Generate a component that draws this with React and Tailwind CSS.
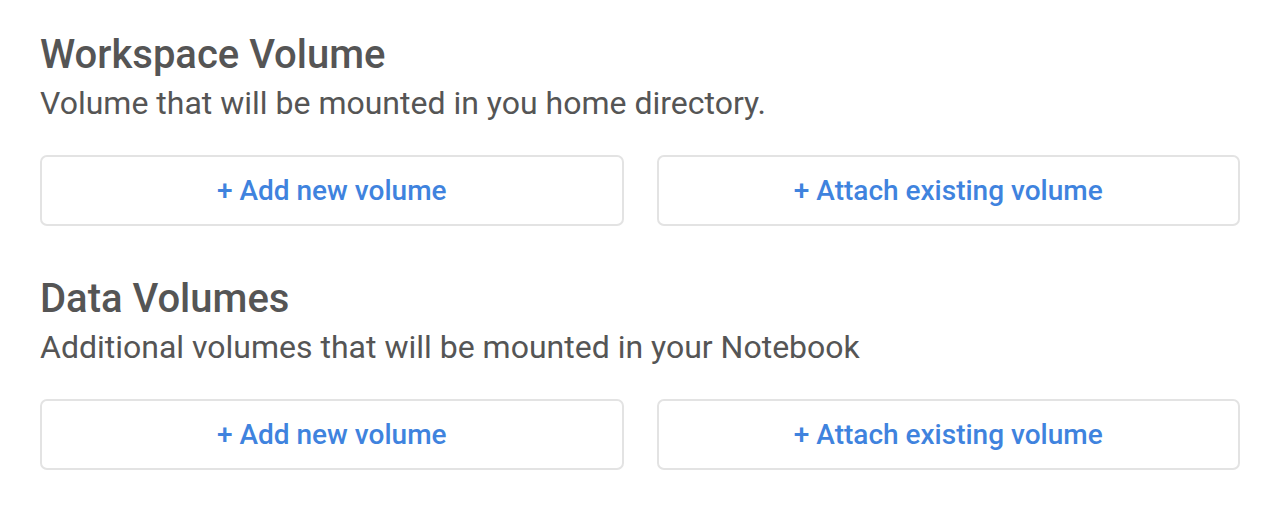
export default function App() {
  const Section = ({ title, sub }) => (
    <div className="flex flex-col">
      <h2 className="text-[40px] leading-[48px] font-medium text-[#555555]">{title}</h2>
      <p className="mt-[4px] text-[32px] leading-[40px] text-[#555555]">{sub}</p>
      <div className="mt-[32px] grid grid-cols-2 gap-[33px]">
        <button className="h-[71px] rounded-[7px] border-2 border-[#e3e3e3] bg-white text-[28px] font-medium text-[#3f83de]">
          + Add new volume
        </button>
        <button className="h-[71px] rounded-[7px] border-2 border-[#e3e3e3] bg-white text-[28px] font-medium text-[#3f83de]">
          + Attach existing volume
        </button>
      </div>
    </div>
  );
  return (
    <div className="w-[1288px] h-[510px] bg-white pl-[40px] pt-[31px]" style={{ fontFamily: "Roboto, sans-serif" }}>
      <div className="w-[1200px] flex flex-col gap-[49px]">
        <Section title="Workspace Volume" sub="Volume that will be mounted in you home directory." />
        <Section title="Data Volumes" sub="Additional volumes that will be mounted in your Notebook" />
      </div>
    </div>
  );
}
